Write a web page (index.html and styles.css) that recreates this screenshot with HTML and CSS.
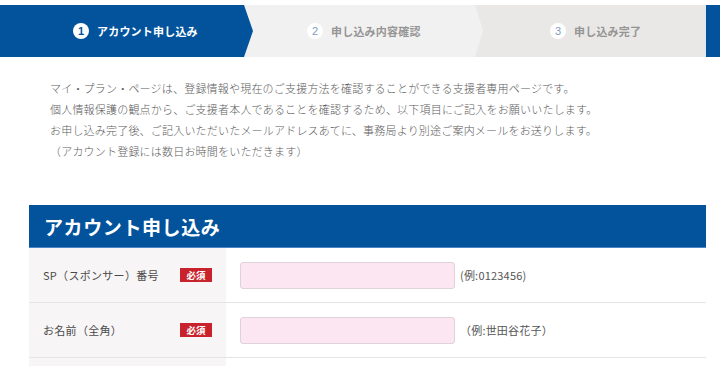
FILE: index.html
```html
<!DOCTYPE html>
<html lang="ja">
<head>
<meta charset="utf-8">
<link rel="stylesheet" href="styles.css">
</head>
<body>
<div class="stepper">
  <div class="step step1"><span class="num">1</span><span class="label">アカウント申し込み</span></div>
  <div class="step step2"><span class="num">2</span><span class="label">申し込み内容確認</span></div>
  <div class="step step3"><span class="num">3</span><span class="label">申し込み完了</span></div>
  <div class="step-end"></div>
</div>
<div class="intro">
  <p>マイ・プラン・ページは、登録情報や現在のご支援方法を確認することができる支援者専用ページです。</p>
  <p>個人情報保護の観点から、ご支援者本人であることを確認するため、以下項目にご記入をお願いいたします。</p>
  <p>お申し込み完了後、ご記入いただいたメールアドレスあてに、事務局より別途ご案内メールをお送りします。</p>
  <p>（アカウント登録には数日お時間をいただきます）</p>
</div>
<section class="form">
  <h2 class="form-title">アカウント申し込み</h2>
  <div class="row">
    <div class="row-label"><span>SP（スポンサー）番号</span><span class="req">必須</span></div>
    <div class="row-value"><input class="field" type="text"><span class="hint">(例:0123456)</span></div>
  </div>
  <div class="row">
    <div class="row-label"><span>お名前（全角）</span><span class="req">必須</span></div>
    <div class="row-value"><input class="field" type="text"><span class="hint">（例:世田谷花子）</span></div>
  </div>
  <div class="row">
    <div class="row-label"></div>
    <div class="row-value"></div>
  </div>
</section>
</body>
</html>
```

FILE: styles.css
```css
* { box-sizing: border-box; }
html, body { margin: 0; padding: 0; background: #fff; }
body {
  font-family: "Noto Sans CJK JP", "Noto Sans", sans-serif;
  color: #555;
  width: 720px;
  height: 366px;
  overflow: hidden;
}
.stepper {
  margin-top: 5px;
  height: 52px;
  display: flex;
  background: #e9e8e7;
}
.step {
  position: relative;
  display: flex;
  align-items: center;
  height: 52px;
  font-size: 11px;
  font-weight: 700;
  letter-spacing: 0.2px;
}
.step .num {
  width: 16px;
  height: 16px;
  border-radius: 50%;
  background: #fff;
  display: flex;
  align-items: center;
  justify-content: center;
  font-family: "Liberation Sans", sans-serif;
  font-size: 11px;
  font-weight: 700;
  margin-right: 8px;
  letter-spacing: 0;
}
.step1 {
  width: 253px;
  padding-left: 73px;
  background: #02539c;
  color: #fff;
  z-index: 3;
  clip-path: polygon(0 0, 244px 0, 253px 50%, 244px 100%, 0 100%);
}
.step1 .num { color: #02539c; }
.step2 {
  width: 239px;
  margin-left: -9px;
  padding-left: 63px;
  background: #f2f1f1;
  color: #959595;
  z-index: 2;
  clip-path: polygon(0 0, 231px 0, 239px 50%, 231px 100%, 0 100%);
}
.step3 {
  width: 230px;
  margin-left: -8px;
  padding-left: 75px;
  background: #e9e8e7;
  color: #959595;
  z-index: 1;
}
.step2 .num, .step3 .num { color: #7f9cc2; font-weight: 400; }
.step-end {
  flex: 1;
  background: #02539c;
  border-left: 1px solid #dfe5ec;
}
.intro {
  margin-top: 21px;
  padding-left: 50px;
  font-size: 11px;
  letter-spacing: 0.2px;
  line-height: 21px;
  color: #5c5c5c;
  font-weight: 300;
}
.intro p { margin: 0; white-space: nowrap; }
.form {
  margin: 43px 14px 0 29px;
}
.form-title {
  margin: 0;
  height: 43px;
  background: #02539c;
  border-bottom: 1px solid #4a86c5;
  color: #fff;
  font-size: 19px;
  font-weight: 700;
  letter-spacing: 0.6px;
  padding-left: 15px;
  display: flex;
  align-items: center;
}
.row {
  display: flex;
  height: 55px;
  border-bottom: 1px solid #e6e5e5;
}
.row-label {
  width: 197px;
  background: #f7f5f6;
  display: flex;
  align-items: center;
  justify-content: space-between;
  padding: 0 14px;
  font-size: 11px;
  color: #4a4a4a;
  letter-spacing: 0.3px;
}
.req {
  width: 32px;
  height: 14px;
  background: #c8232c;
  color: #fff;
  font-size: 9.5px;
  font-weight: 700;
  display: flex;
  align-items: center;
  justify-content: center;
  letter-spacing: 0;
}
.row-value {
  flex: 1;
  display: flex;
  align-items: center;
  padding-left: 14px;
}
.field {
  width: 215px;
  height: 27px;
  margin: 0;
  background: #fbe6f1;
  border: 1px solid #ddd3d8;
  border-radius: 3px;
}
.hint {
  margin-left: 5px;
  font-size: 11px;
  color: #555;
  letter-spacing: 0.2px;
}
```
